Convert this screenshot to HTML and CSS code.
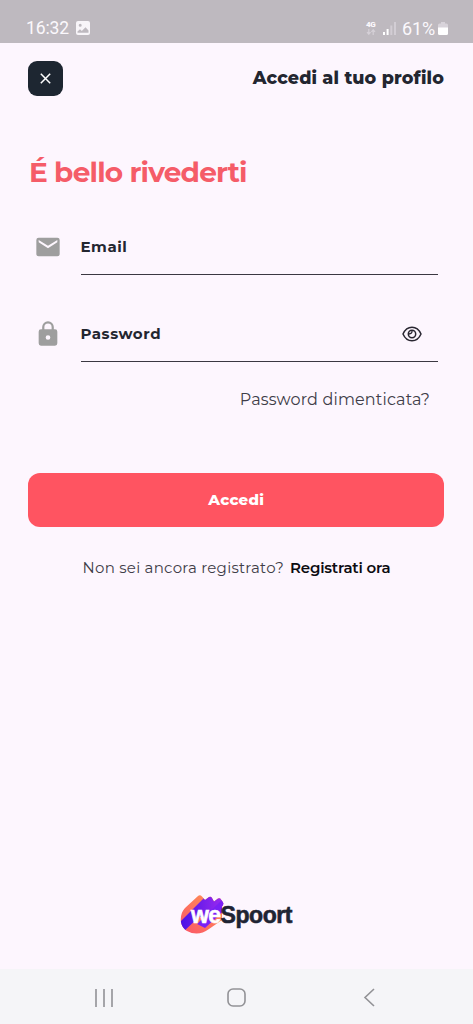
FILE: index.html
```html
<!DOCTYPE html>
<html lang="it">
<head>
<meta charset="utf-8">
<title>Accedi al tuo profilo</title>
<link rel="stylesheet" href="styles.css">
</head>
<body>
<div class="screen">
  <div class="status">
    <span class="clock">16:32</span>
    <svg class="photo" width="14" height="14" viewBox="0 0 14 14"><path fill="#f8f5f9" fill-rule="evenodd" d="M2 0h10a2 2 0 0 1 2 2v10a2 2 0 0 1-2 2H2a2 2 0 0 1-2-2V2a2 2 0 0 1 2-2zM1.5 11.8h11V9.6L9.5 6.3 5.8 9.9 4 8.3 1.5 10.6zM4.2 2.8a1.5 1.5 0 1 0 0 3a1.5 1.5 0 0 0 0-3z"/></svg>
    <div class="network"><b>4G</b>
      <svg width="10" height="6" viewBox="0 0 10 6" fill="none" stroke="#d5d0d7" stroke-width="1.2"><path d="M2.8 0v5M1 3.2l1.8 2 1.8-2M7.2 6V1M5.4 2.8l1.8-2 1.8 2"/></svg>
    </div>
    <svg class="signal" width="13" height="13" viewBox="0 0 13 13"><path fill="#fff" d="M0 10h2v3H0zM3.600 7h2v6h-2z"/><path fill="#d2cdd4" d="M7.300 3.500h2V13h-2zM11 0h2v13h-2z"/></svg>
    <span class="charge">61%</span>
    <svg width="10" height="13" viewBox="0 0 10 13"><path fill="#d8d3da" d="M3 0h4v1.600h1.500A1.500 1.500 0 0 1 10 3.100V6H0V3.100a1.500 1.500 0 0 1 1.500-1.500H3z"/><path fill="#fff" d="M0 5.500h10v6a1.500 1.500 0 0 1-1.500 1.500h-7A1.500 1.500 0 0 1 0 11.500z"/></svg>
  </div>
  <main class="content">
    <header class="top">
      <button class="close" aria-label="Chiudi"><svg width="11" height="11" viewBox="0 0 11 11" stroke="#fff" stroke-width="1.500"><path d="M.8.8l9.400 9.400M10.200.8L.8 10.200"/></svg></button>
      <h2 class="title">Accedi al tuo profilo</h2>
    </header>
    <h1 class="welcome">É bello rivederti</h1>
    <div class="field">
      <svg class="lead" width="28" height="28" viewBox="0 0 24 24"><path fill="#9e9e9e" d="M20 4H4a2 2 0 0 0-2 2v12a2 2 0 0 0 2 2h16a2 2 0 0 0 2-2V6a2 2 0 0 0-2-2zm0 4l-8 5-8-5V6l8 5 8-5z"/></svg>
      <div class="line"><span class="label">Email</span></div>
    </div>
    <div class="field second">
      <svg class="lead" width="28" height="28" viewBox="0 0 24 24"><path fill="#9e9e9e" d="M18 8h-1V6A5 5 0 0 0 7 6v2H6a2 2 0 0 0-2 2v10a2 2 0 0 0 2 2h12a2 2 0 0 0 2-2V10a2 2 0 0 0-2-2zm-6 9a2 2 0 1 1 0-4 2 2 0 0 1 0 4zm3.100-9H8.900V6a3.100 3.100 0 0 1 6.200 0z"/></svg>
      <div class="line"><span class="label">Password</span>
        <svg class="eye" width="20" height="16" viewBox="0 0 20 16" fill="none" stroke="#292631" stroke-width="1.500"><path d="M1 8C5-1.100 15-1.100 19 8C15 17.100 5 17.100 1 8z"/><circle cx="10" cy="8" r="3.700"/><path stroke-width="1.300" d="M10 4.600Q10.400 7.800 6.800 8"/></svg>
      </div>
    </div>
    <a class="forgot">Password dimenticata?</a>
    <button class="submit">Accedi</button>
    <p class="register"><span class="ask">Non sei ancora registrato?</span><a class="join">Registrati ora</a></p>
    <svg class="logo" width="113" height="40" viewBox="0 0 113 40" role="img" aria-label="weSpoort">
      <defs>
        <clipPath id="mark"><path d="M5 13L18 1q2-1.500 4 .5l3 3.500 4-3q2-1 3 1l2 3.500 4-3q2-1 3 1l2 3q1 2-1 4L42 25 29 34Q18 42 7 36C-2 30 0 18 5 13z"/></clipPath>
        <linearGradient id="violet" x1="0" x2="1"><stop stop-color="#4311e6"/><stop offset="1" stop-color="#a52df0"/></linearGradient>
        <linearGradient id="coral" x1="0" y1="1" x2="1" y2="0"><stop stop-color="#fb5268"/><stop offset="1" stop-color="#ff9b52"/></linearGradient>
      </defs>
      <g clip-path="url(#mark)">
        <path fill="url(#coral)" d="M0 0h48v40H0z"/>
        <path fill="url(#violet)" d="M-2 29L33-6h15v17L33 22H19L2 38z"/>
        <path fill="#7a20f5" d="M17 29L43 4l5 8-23 21z"/>
      </g>
      <text class="wordmark we" x="11" y="27.500" textLength="30">we</text>
      <text class="wordmark" x="40.500" y="27.500" textLength="72">Spoort</text>
    </svg>
  </main>
  <nav class="navbar">
    <svg width="18" height="18" viewBox="0 0 18 18" stroke="#929296" stroke-width="1.600"><path d="M1 0v18M9 0v18M17 0v18"/></svg>
    <svg class="home" width="19" height="19" viewBox="0 0 19 19" fill="none" stroke="#929296" stroke-width="1.600"><rect x="1" y="1" width="17" height="17" rx="5"/></svg>
    <svg width="12" height="19" viewBox="0 0 12 19" fill="none" stroke="#929296" stroke-width="1.600"><path d="M11 1L2 9.500l9 8.500"/></svg>
  </nav>
</div>
</body>
</html>
```
FILE: styles.css
```css
* { box-sizing: border-box; margin: 0; }
body { font-family: Montserrat, Inter, sans-serif; color: #232630; background: #fdf6fe; }
button { border: 0; font: inherit; color: inherit; padding: 0; }
svg { display: block; flex: none; }
.screen { width: 473px; height: 1024px; display: flex; flex-direction: column; overflow: hidden; }
.status { height: 43px; background: #beb9bf; color: #fbf8fc; display: flex; align-items: center; padding: 13px 25px 0 26px; font: 17.500px Roboto, sans-serif; }
.clock { width: 43px; white-space: nowrap; letter-spacing: -.1px; }
.photo { margin-left: 7px; }
.network { margin-left: auto; width: 11px; font: bold 8px/8px Roboto, sans-serif; letter-spacing: -.2px; }
.network b { display: block; }
.signal { margin: 1px 6px 0; }
.charge { margin-right: 3px; font-size: 18px; letter-spacing: -.1px; }
.content { flex: 1; display: flex; flex-direction: column; padding: 17.500px 29px 34px; }
.top { display: flex; justify-content: space-between; align-items: center; height: 35px; }
.close { width: 35px; height: 35px; border-radius: 9px; background: #1d2631; display: grid; place-items: center; margin-left: -.6px; }
.title { font-size: 17.500px; line-height: 22px; font-weight: 800; white-space: nowrap; letter-spacing: .15px; }
.welcome { margin-top: 57.500px; height: 38px; font-size: 28px; line-height: 38px; font-weight: 700; color: #f55c68; white-space: nowrap; letter-spacing: -.8px; }
.field { display: flex; height: 56px; margin-top: 28px; padding: 0 6px 0 5px; }
.second { margin-top: 31px; }
.lead { margin-top: 13.500px; }
.line { flex: 1; margin-left: 18.500px; border-bottom: 1px solid #3b3842; display: flex; justify-content: space-between; align-items: center; padding-right: 16px; }
.label { font-size: 15px; font-weight: 700; letter-spacing: .55px; }
.forgot { align-self: flex-end; margin: 27px 14px 0 0; font-size: 16px; line-height: 22px; color: #403d48; white-space: nowrap; letter-spacing: .15px; }
.submit { height: 54px; margin: 62px 0 0 -.6px; padding-bottom: 2px; border-radius: 12px; background: #ff5461; color: #fff; font-size: 15px; font-weight: 800; letter-spacing: .25px; }
.register { display: flex; justify-content: center; gap: 6px; margin-top: 31px; font-size: 15px; line-height: 20px; white-space: nowrap; }
.ask { color: #403d48; letter-spacing: .25px; }
.join { color: #0c0b10; font-weight: 600; letter-spacing: -.2px; }
.logo { margin: auto auto 0; }
.wordmark { font: 700 23px "Liberation Sans", sans-serif; fill: #1f2433; stroke: #1f2433; stroke-width: .6px; }
.we { fill: #fff; stroke: #fff; }
.navbar { height: 55px; background: #f5f5f8; display: flex; justify-content: space-between; align-items: center; padding: 2px 98px 0 95px; }
.home { margin-left: -3px; }
```
